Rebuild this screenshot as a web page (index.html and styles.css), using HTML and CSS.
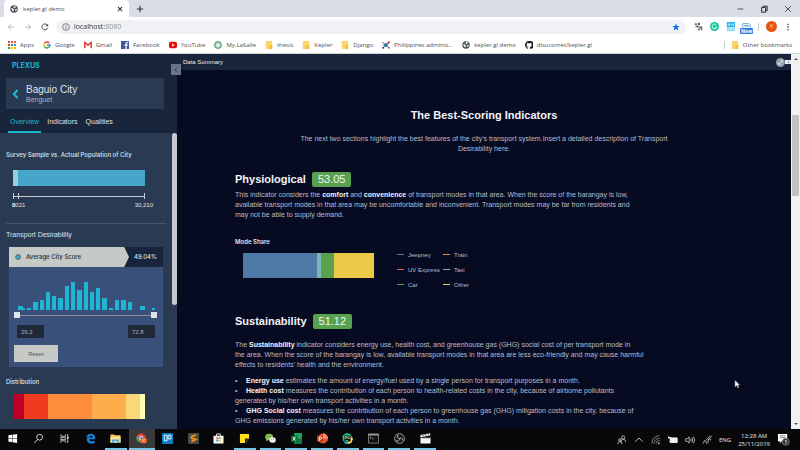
FILE: index.html
```html
<!DOCTYPE html>
<html lang="en">
<head>
<meta charset="utf-8">
<title>kepler.gl demo</title>
<link rel="stylesheet" href="styles.css">
</head>
<body>
<header class="browser">
  <div class="tabstrip">
    <div class="tab">
      <svg class="i8" viewBox="0 0 16 16"><circle cx="8" cy="8" r="7.5" fill="#50555b"/><path d="M2 6l4 1 2 3-2 3-2-3zM8 2l4 1-2 3-3-1zM11 8l3 0-2 4-2-1z" fill="#fff"/></svg>
      <span class="tab-title">kepler.gl demo</span>
      <button class="plain" aria-label="Close tab"><svg class="i6" viewBox="0 0 10 10"><path d="M1.500 1.500l7 7M8.500 1.500l-7 7" stroke="#333" stroke-width="1.700"/></svg></button>
    </div>
    <button class="plain" aria-label="New tab"><svg class="i8" viewBox="0 0 10 10"><path d="M5 1v8M1 5h8" stroke="#333" stroke-width="1.400"/></svg></button>
    <div class="window-controls">
      <button class="plain" aria-label="Minimize"><svg class="i8" viewBox="0 0 10 10"><path d="M2 5h7" stroke="#333"/></svg></button>
      <button class="plain" aria-label="Restore"><svg class="i8" viewBox="0 0 10 10"><path d="M2 3h5v6H2zM4 3V1.500h5V7H7" fill="none" stroke="#222" stroke-width="1.200"/></svg></button>
      <button class="plain" aria-label="Close"><svg class="i8" viewBox="0 0 10 10"><path d="M1.500 1.500l7 7M8.500 1.500l-7 7" stroke="#333"/></svg></button>
    </div>
  </div>
  <div class="toolbar">
    <nav class="history">
      <button class="plain" aria-label="Back"><svg class="i8" viewBox="0 0 10 10"><path d="M9 5H1.500M5 1.500L1.500 5 5 8.500" fill="none" stroke="#a5a8ac"/></svg></button>
      <button class="plain" aria-label="Forward"><svg class="i8" viewBox="0 0 10 10"><path d="M1 5h7.500M5 1.500L8.500 5 5 8.500" fill="none" stroke="#a5a8ac"/></svg></button>
      <button class="plain" aria-label="Reload"><svg class="i8" viewBox="0 0 10 10"><path d="M8.500 6A3.700 3.700 0 1 1 7.800 2.500" fill="none" stroke="#44474b" stroke-width="1.200"/><path d="M9 .8v3.400H5.600z" fill="#44474b"/></svg></button>
    </nav>
    <div class="omnibox">
      <svg class="i8" viewBox="0 0 10 10"><circle cx="5" cy="5" r="4.200" fill="none" stroke="#5f6368"/><path d="M5 4.400v3M5 2.400v1.100" stroke="#5f6368" stroke-width="1.100"/></svg>
      <input class="url" aria-label="Address" value="localhost:8080">
      <svg class="i8" viewBox="0 0 10 10"><path d="M5 .6l1.300 3 3.200.3L7.100 6l.7 3.300L5 7.600 2.200 9.300 2.900 6 .5 3.900l3.200-.3z" fill="#1a73e8"/></svg>
    </div>
    <div class="extensions">
      <svg class="i9" viewBox="0 0 12 12"><path d="M1 2h3v2H1zM5 1h3v3H5zM2 5h4v2H2zM6 6h5v2H6zM5 9h3v2H5zM9 8h2v3H9z" fill="#666"/><path d="M1 1l9 9" stroke="#888"/></svg>
      <svg class="i9" viewBox="0 0 12 12"><circle cx="6" cy="6" r="6" fill="#15c39a"/><path d="M8.500 4A3.200 3.200 0 1 0 9 7H6.500" fill="none" stroke="#fff" stroke-width="1.300"/></svg>
      <svg class="i9" viewBox="0 0 12 12"><path d="M1 0h11v7H1z" fill="#27b5e8"/><path d="M1 7h11v5H1z" fill="#8fdcf5"/><path d="M3 2v3M5 2v3M8 2v3M10 2v3M4 9h5" stroke="#fff"/></svg>
      <span class="new-ext">
        <svg class="i9" viewBox="0 0 12 12"><path d="M1 9V2h8l2 2v5" fill="#eaf5fd" stroke="#5c9bc4"/><path d="M3 5h6" stroke="#5c9bc4" stroke-width="1.500"/></svg>
        <b class="new-badge">New</b>
      </span>
      <i class="vrule"></i>
      <span class="avatar">K</span>
      <svg class="i8" viewBox="0 0 10 10"><path d="M4.200 1h1.700v1.700H4.200zM4.200 4.200h1.700v1.700H4.200zM4.200 7.400h1.700v1.700H4.200z" fill="#444"/></svg>
    </div>
  </div>
  <nav class="bookmarks">
    <a href="#"><svg class="i8" viewBox="0 0 8 8"><path d="M0 0h2v2H0zM0 3h2v2H0z" fill="#ea4335"/><path d="M3 0h2v2H3zM6 0h2v2H6z" fill="#e8594c"/><path d="M3 3h2v2H3zM0 6h2v2H0z" fill="#34a853"/><path d="M6 3h2v2H6z" fill="#4285f4"/><path d="M3 6h2v2H3zM6 6h2v2H6z" fill="#fbbc05"/></svg>Apps</a>
    <a href="#"><svg class="i8" viewBox="0 0 10 10" fill="none" stroke-width="1.900"><path d="M1.900 3A3.700 3.700 0 0 1 7.800 2.400" stroke="#ea4335"/><path d="M1.900 3a3.700 3.700 0 0 0 0 4" stroke="#fbbc05"/><path d="M1.900 7a3.700 3.700 0 0 0 5.800.6" stroke="#34a853"/><path d="M5 5h3.700a3.700 3.700 0 0 1-1 2.600" stroke="#4285f4"/></svg>Google</a>
    <a href="#"><svg class="i8" viewBox="0 0 10 10"><path d="M1 1.500h8v7H1z" fill="#f3f3f3"/><path d="M1 9V1.800l4 3.400 4-3.400V9" fill="none" stroke="#d93025" stroke-width="1.700"/></svg>Gmail</a>
    <a href="#"><svg class="i8" viewBox="0 0 10 10"><path d="M0 0h10v10H0z" fill="#3b5998"/><path d="M9 1.900H7.800Q6.300 1.900 6.300 3.500V10M4.500 5.200h4" fill="none" stroke="#fff" stroke-width="1.500"/></svg>Facebook</a>
    <a href="#"><svg class="i8" viewBox="0 0 10 10"><rect y="1" width="10" height="8" rx="2" fill="#e60f0f"/><path d="M4 3l3 2-3 2z" fill="#fff"/></svg>YouTube</a>
    <a href="#"><svg class="i8" viewBox="0 0 10 10"><circle cx="5" cy="5" r="4.300" fill="#a8cfb8" stroke="#3f9a6b" stroke-width="1.200"/><path d="M3 4l2-1 2 1v2L5 8 3 6z" fill="#e8f3ec"/></svg>My.LaSalle</a>
    <a href="#"><svg class="i8" viewBox="0 0 10 10"><path d="M1 0h8v10H1z" fill="#fbd56b"/><path d="M6 5h3v5H5z" fill="#f2bf3f"/></svg>thesis</a>
    <a href="#"><svg class="i8" viewBox="0 0 10 10"><path d="M1 0h8v10H1z" fill="#fbd56b"/><path d="M6 5h3v5H5z" fill="#f2bf3f"/></svg>Kepler</a>
    <a href="#"><svg class="i8" viewBox="0 0 10 10"><path d="M1 0h8v10H1z" fill="#fbd56b"/><path d="M6 5h3v5H5z" fill="#f2bf3f"/></svg>Django</a>
    <a href="#"><svg class="i8" viewBox="0 0 10 10"><path d="M0 1l9 8M1 9l8-7M5 5H1" stroke="#43648a"/><circle cx="5" cy="5" r="2.500" fill="#2877b0"/><circle cx="8.500" cy="1.700" r="1.500" fill="#d23f31"/><circle cx="1.500" cy="8.500" r="1.200" fill="#335"/><circle cx="8.800" cy="8.500" r="1" fill="#335"/></svg>Philippines adminis...</a>
    <a href="#"><svg class="i8" viewBox="0 0 16 16"><circle cx="8" cy="8" r="7.500" fill="#50555b"/><path d="M2 6l4 1 2 3-2 3-2-3zM8 2l4 1-2 3-3-1zM11 8l3 0-2 4-2-1z" fill="#fff"/></svg>kepler.gl demo</a>
    <a href="#"><svg class="i8" viewBox="0 0 16 16"><path fill="#191717" d="M8 0C3.580 0 0 3.580 0 8c0 3.540 2.290 6.530 5.470 7.590.4.070.55-.17.55-.38v-1.490c-2.010.37-2.690-.49-2.690-.94-.36-.91-.6-1.100-1.100-1.400.9-.5 1.500.4 1.900 1 .72 1.210 1.870.87 2.330.66.070-.52.280-.87.510-1.070C5.190 11.770 3.300 11 3.300 8c0-.87.310-1.590.82-2.150-.1-.2-.36-1.020.08-2.120 0 0 .67-.21 2.200.82a7.600 7.600 0 0 1 4 0c1.530-1.040 2.200-.82 2.200-.82.440 1.100.16 1.920.08 2.120.51.560.82 1.270.82 2.150 0 3-1.870 3.770-3.650 3.970.29.250.54.730.54 1.480v2.200c0 .21.150.46.550.38A8 8 0 0 0 8 0z"/></svg>dlsucomet/kepler.gl</a>
    <a href="#" class="other"><svg class="i8" viewBox="0 0 10 10"><path d="M1 0h8v10H1z" fill="#fbd56b"/><path d="M6 5h3v5H5z" fill="#f2bf3f"/></svg>Other bookmarks</a>
  </nav>
</header>

<div class="app">
  <aside class="sidebar">
    <div class="side-head">
      <div class="brand">PLEXUS</div>
      <div class="city">
        <button class="plain" aria-label="Back to cities"><svg class="back" viewBox="0 0 8 12"><path d="M6.500 1.200L2 6l4.500 4.800" fill="none" stroke="#1fbad6" stroke-width="2.400"/></svg></button>
        <div>
          <h1>Baguio City</h1>
          <p>Benguet</p>
        </div>
      </div>
      <nav class="tabs">
        <a href="#" class="active">Overview</a>
        <a href="#">Indicators</a>
        <a href="#">Qualities</a>
      </nav>
    </div>
    <button class="collapse" aria-label="Collapse sidebar"><svg class="i6" viewBox="0 0 10 10"><path d="M6.500 2L3.500 5l3 3" fill="none" stroke="#26303f" stroke-width="1.400"/></svg></button>
    <div class="side-body">
      <div class="side-scroll">
        <section class="population">
          <h2>Survey Sample vs. Actual Population of City</h2>
          <div class="pop-bar"><i></i></div>
          <div class="axis"><i></i></div>
          <div class="axis-labels"><span class="low"><span>0</span><span>8021</span></span><span class="high">30,210</span></div>
        </section>
        <section class="desirability">
          <h2 class="large">Transport Desirability</h2>
          <div class="card">
            <div class="card-head">
              <div class="ribbon"><svg class="i6" viewBox="0 0 10 10"><circle cx="5" cy="5" r="3.900" fill="#27b5cf" stroke="#6b7373" stroke-width="1.800"/></svg>Average City Score</div>
              <strong>49.04%</strong>
            </div>
            <svg class="histogram" viewBox="0 0 143 30"><g fill="#1fb6d6"><path d="M4 26h5v4H4zM7 28h4v2H7zM13 28h4v2h-4zM19 22h5v8h-5zM26 20h4v10h-4zM32 12h4v18h-4zM38 16h4v14h-4zM44 18h5v12h-5zM51 6h4v24h-4zM57 2h4v28h-4zM63 10h5v20h-5zM70 2h4v28h-4zM76 12h4v18h-4zM82 8h4v22h-4zM88 18h5v12h-5zM95 28h4v2h-4zM101 20h4v10h-4zM107 20h5v10h-5zM114 22h4v8h-4zM126 26h5v4h-5zM138 28h3v2h-3z"/></g></svg>
            <div class="slider">
              <input type="range" min="0" max="100" value="0" aria-label="Minimum score">
              <input type="range" min="0" max="100" value="100" aria-label="Maximum score">
            </div>
            <div class="bounds">
              <input type="text" value="29.2" aria-label="Lower bound">
              <input type="text" value="72.8" aria-label="Upper bound">
            </div>
            <button class="reset">Reset</button>
          </div>
        </section>
        <section class="distribution">
          <h2>Distribution</h2>
          <div class="stack">
            <i class="d1"></i><i class="d2"></i><i class="d3"></i><i class="d4"></i><i class="d5"></i><i class="d6"></i>
          </div>
        </section>
      </div>
      <div class="side-track"><i></i></div>
    </div>
  </aside>

  <main class="main">
    <div class="main-head">
      <span>Data Summary</span>
      <span class="head-icons"><svg class="i9" viewBox="0 0 12 12"><circle cx="6" cy="6" r="6" fill="#98a0ad"/><path d="M4 8l4-4M6 3.500h2.500V6M3.500 6v2.500H6" stroke="#e8ebf0" fill="none"/></svg><svg class="tag" viewBox="0 0 6 4"><path d="M0 0h6v4H0z" fill="#e9ecf2"/><path d="M3 2h1" stroke="#334"/></svg></span>
    </div>
    <div class="content">
      <h2>The Best-Scoring Indicators</h2>
      <p class="intro">The next two sections highlight the best features of the city's transport system.Insert a detailed description of Transport<br>Desirability here.</p>

      <section class="physio">
        <h3>Physiological <span class="badge">53.05</span></h3>
        <p>This indicator considers the <b>comfort</b> and <b>convenience</b> of transport modes in that area. When the score of the barangay is low,<br>available transport modes in that area may be uncomfortable and inconvenient. Transport modes may be far from residents and<br>may not be able to supply demand.</p>
        <h4>Mode Share</h4>
        <div class="mode">
          <div class="mode-bar"><i class="m1"></i><i class="m2"></i><i class="m3"></i><i class="m4"></i></div>
          <ul class="legend">
            <li><i class="jeepney"></i>Jeepney</li><li><i class="train"></i>Train</li>
            <li><i class="uv"></i>UV Express</li><li><i class="taxi"></i>Taxi</li>
            <li><i class="car"></i>Car</li><li><i class="misc"></i>Other</li>
          </ul>
        </div>
      </section>

      <section class="sustain">
        <h3>Sustainability <span class="badge">51.12</span></h3>
        <p>The <b>Sustainability</b> indicator considers energy use, health cost, and greenhouse gas (GHG) social cost of per transport mode in<br>the area. When the score of the barangay is low, available transport modes in that area are less eco-friendly and may cause harmful<br>effects to residents' health and the environment.</p>
        <ul class="points">
          <li><b>Energy use</b> estimates the amount of energy/fuel used by a single person for transport purposes in a month.</li>
          <li><b>Health cost</b> measures the contribution of each person to health-related costs in the city, because of airborne pollutants<br>generated by his/her own transport activities in a month.</li>
          <li><b>GHG Social cost</b> measures the contribution of each person to greenhouse gas (GHG) mitigation costs in the city, because of<br>GHG emissions generated by his/her own transport activities in a month.</li>
        </ul>
      </section>
    </div>
  </main>
  <div class="page-scroll">
    <svg class="i6" viewBox="0 0 6 6"><path d="M1 4l2-2 2 2z" fill="#505050"/></svg>
    <i></i>
    <svg class="i6" viewBox="0 0 6 6"><path d="M1 2l2 2 2-2z" fill="#505050"/></svg>
  </div>
  <svg class="cursor" viewBox="0 0 8 12"><path d="M1 .8v8.400l2-1.800 1.300 3 1.400-.6-1.300-2.900H7z" fill="#fff" stroke="#222" stroke-width=".5"/></svg>
</div>

<footer class="taskbar">
  <div class="apps">
    <span><svg viewBox="0 0 12 12"><path d="M1.500 2.500l4-.6v3.800h-4zM6 1.800l5-.7v4.600H6zM1.500 6.200h4V10l-4-.6zM6 6.200h5v4.600L6 10.100z" fill="#fff"/></svg></span>
    <span><svg viewBox="0 0 12 12"><circle cx="7.200" cy="4.600" r="3.200" fill="none" stroke="#ddd"/><path d="M5 7l-3.500 4" stroke="#ddd"/></svg></span>
    <span><svg viewBox="0 0 12 12"><path d="M2 1.500v2h5v-2M2 10.500v-2h5v2M2 5h5v2.200H2zM9.500 1v10" fill="none" stroke="#ddd" stroke-width=".9"/><path d="M9 4h1.500v2H9z" fill="#fff"/></svg></span>
    <span><svg viewBox="0 0 12 12"><path d="M1 5.800C1.300 2.700 3.500.8 6.300.8c3.200 0 4.900 2.200 4.900 4.900v1.200H4.500c.1 1.700 1.500 2.400 3 2.400 1.200 0 2.200-.3 3-.8v2.300c-.9.500-2.200.8-3.600.8C4 11.600 2 10 2 7.400c0-2 1-3.400 2.700-4.100C3 3.500 1.900 4.300 1 5.800zM4.600 5h3.900c0-1.200-.7-1.900-1.900-1.900-1.100 0-1.800.8-2 1.900z" fill="#1683d8"/></svg></span>
    <span class="run"><svg viewBox="0 0 12 12"><path d="M.5 1.500h4l1 1h6v8H.5z" fill="#f0c75c"/><path d="M.5 4h11v6.500H.5z" fill="#fbe391"/><path d="M2 7h8v4H8V9H4v2H2z" fill="#53a7d8"/></svg></span>
    <span class="run current"><svg viewBox="0 0 12 12"><circle cx="5.500" cy="5.500" r="5" fill="#e54335"/><path d="M1.200 3L4 7.500 5 10.500A5 5 0 0 1 1.200 3z" fill="#34a853"/><path d="M10.500 5.500a5 5 0 0 1-5 5l2-4z" fill="#fbbc05"/><circle cx="5.500" cy="5.500" r="2" fill="#4285f4" stroke="#fff" stroke-width=".8"/><circle cx="8.700" cy="8.300" r="3.200" fill="#f26a1b"/><path d="M7.800 6.800v3M9.700 6.800L8 8.400l1.700 1.400" stroke="#fcd3b3" stroke-width=".6" fill="none"/></svg></span>
    <span><svg viewBox="0 0 12 12"><rect width="12" height="12" rx="1" fill="#0a7fc9"/><path d="M2.500 2.500h3v6h-3zM6.700 2.500h3v4h-3z" fill="none" stroke="#fff" stroke-width="1"/></svg></span>
    <span><svg viewBox="0 0 12 12"><rect width="12" height="12" rx="1" fill="#4a4a4a"/><path d="M8.500 2.200L4 4v1.700L8.200 7 3.800 9.600" fill="none" stroke="#ff9800" stroke-width="1.900"/></svg></span>
    <span><svg viewBox="0 0 12 12"><path d="M4 3.500V1h4v2.500" fill="none" stroke="#eee"/><path d="M.5 3h11v8.500H.5z" fill="#f5f5f5"/><path d="M3.700 4.700h2v2h-2z" fill="#f25022"/><path d="M6.300 4.700h2v2h-2z" fill="#7fba00"/><path d="M3.700 7.300h2v2h-2z" fill="#00a4ef"/><path d="M6.300 7.300h2v2h-2z" fill="#ffb900"/></svg></span>
    <span class="run"><svg viewBox="0 0 12 12"><path d="M1 1h10v6l-4 4H1z" fill="#ffe01b"/><path d="M6.500 6H11v1.500L8 11H6.500z" fill="#2b2b2b"/></svg></span>
    <span class="run"><svg viewBox="0 0 12 12"><ellipse cx="4.500" cy="4.300" rx="4.300" ry="3.600" fill="#8bc34a"/><path d="M1.500 6.500L1 9l2.500-1.500z" fill="#8bc34a"/><ellipse cx="8.200" cy="7.500" rx="3.600" ry="3" fill="#f1f5ec"/><path d="M9.500 9.500l1.500 1.500-.3-2.500z" fill="#f1f5ec"/><path d="M2.800 3.700h1M5.500 3.700h1M7 7h.8M9 7h.8" stroke="#345" stroke-width=".8"/></svg></span>
    <span class="run"><svg viewBox="0 0 12 12"><path d="M3.500 0H12v12H3.500z" fill="#21a366"/><path d="M7.500 6H12v6H3.500V9z" fill="#107c41"/><path d="M0 3h7v6.500H0z" fill="#0e6b38"/><path d="M2 4.300l3 4M5 4.300l-3 4" stroke="#fff" stroke-width="1"/></svg></span>
    <span class="run"><svg viewBox="0 0 12 12"><circle cx="6.500" cy="6" r="5.500" fill="#e6552d"/><path d="M6.500.5A5.500 5.500 0 0 1 12 6H6.500z" fill="#ff8f6b"/><path d="M0 3h6.500v6.500H0z" fill="#c43e1c"/><path d="M2.500 8.700v-4.500h1.200a1.200 1.200 0 0 1 0 2.600H2.500" fill="none" stroke="#fff" stroke-width=".9"/></svg></span>
    <span class="run"><svg viewBox="0 0 12 12"><path d="M.5 3L5 0l4 1 3 5-2 5-6 1-3-4z" fill="#21c777"/><path d="M8 4l4 2-2 5-4 1z" fill="#f5df4d"/><path d="M1 7l3 5 2-2z" fill="#10b5d8"/><path d="M2.700 2.700h6.600v6.600H2.700z" fill="#111"/><path d="M4 6.300V3.800h1.200a.8.800 0 0 1 0 1.500H4M8.500 4.200a1.200 1.200 0 1 0 0 1.700M4 8.300h2.500" fill="none" stroke="#fff" stroke-width=".7"/></svg></span>
    <span class="run"><svg viewBox="0 0 12 12"><path d="M.5 1h11v10H.5z" fill="#111" stroke="#8d8d8d" stroke-width=".9"/><path d="M.5 2h11" stroke="#bbb" stroke-width="1.300"/><path d="M2 4l1.500 1L2 6M4.500 6.200H6" fill="none" stroke="#ddd" stroke-width=".7"/></svg></span>
    <span class="run"><svg viewBox="0 0 12 12"><circle cx="6" cy="6" r="5.400" fill="#1d1d1f" stroke="#bbb" stroke-width=".8"/><path d="M6 6c-2-.5-3-2-1.500-4M6 6c2-1 3.800 0 4 2.200M6 6c0 2-1.600 3.500-4 2.500" fill="none" stroke="#bbb" stroke-width="1"/></svg></span>
    <span class="run"><svg viewBox="0 0 12 12"><path d="M.5 5h11v6.500H.5zM.3 2.200L11 .2l.4 2.500L.7 4.600z" fill="#f7f7f7"/><path d="M2.500 1.800l1.500 2M5.500 1.200l1.500 2M8.500.7l1.500 2M.5 5.200h11" stroke="#111" stroke-width=".8"/></svg></span>
  </div>
  <div class="tray">
    <svg viewBox="0 0 12 12"><g fill="none" stroke="#ddd" stroke-width=".9"><circle cx="7.500" cy="3" r="2"/><path d="M4.500 9c0-2.500 1.500-4 3-4s3 1.500 3 3.500"/><circle cx="3.500" cy="6" r="1.500"/><path d="M1 11c0-2 1-3.300 2.500-3.300S6 9 6 11"/></g></svg>
    <svg viewBox="0 0 12 12"><path d="M1.500 8L6 3.500 10.500 8" fill="none" stroke="#ddd"/></svg>
    <svg viewBox="0 0 12 12"><g fill="none" stroke="#aaa" stroke-width=".9"><path d="M1 10a9 9 0 0 1 9-9M3.500 10.500A6.500 6.500 0 0 1 10.500 4M6 10.500a4 4 0 0 1 4.500-3.700"/></g><circle cx="9.500" cy="10" r="1" fill="#eee"/></svg>
    <svg viewBox="0 0 12 12"><path d="M2.500 3.500H11V9H2.500z" fill="#eee" stroke="#fff"/><path d="M0 3h4M1 1.500v3" stroke="#fff"/></svg>
    <svg viewBox="0 0 12 12"><g fill="none" stroke="#ddd" stroke-width=".9"><path d="M.8 4.500h2L5 2.200v7.600L2.800 7.500h-2zM6.700 4.300q1 1.700 0 3.400M8.500 3q1.700 3 0 6M10.300 2q2.200 4 0 8"/></g></svg>
    <svg viewBox="0 0 12 12"><path d="M1 10.500c2-1 .5-4 2.500-4s1 4 3 3.500S6.500 6 8 5s3 0 2.500 1.500M5 6l5-5 1.300 1.300L7 6.500" fill="none" stroke="#ddd" stroke-width=".9"/></svg>
    <span>ENG</span>
    <time>12:28 AM<br>25/11/2019</time>
    <svg class="notice" viewBox="0 0 14 14"><path d="M1 1h10v8H5l-2 2V9H1z" fill="#fff"/><path d="M3 3h6M3 5h6" stroke="#555" stroke-width=".8"/><circle cx="9.500" cy="9.500" r="3.800" fill="#333" stroke="#999" stroke-width=".7"/><path d="M8.700 8.500l1-.8v3.800" stroke="#fff" fill="none" stroke-width=".8"/></svg>
  </div>
</footer>
</body>
</html>
```

FILE: styles.css
```css
* { box-sizing: border-box; margin: 0; padding: 0; }

body {
  display: flex;
  flex-direction: column;
  height: 100vh;
  overflow: hidden;
  font: 7px/10px "Liberation Sans", Arial, sans-serif;
  background: #070b22;
}

svg { display: block; flex: none; }
i { display: block; flex: none; }
a { color: inherit; text-decoration: none; }
ul { list-style: none; }
input, button { font: inherit; border: 0; min-width: 0; }
.plain { background: none; display: block; }
.i6 { width: 6px; height: 6px; }
.i8 { width: 8px; height: 8px; }
.i9 { width: 9px; height: 9px; }

/* Browser chrome */
.browser {
  flex: none;
  background: #fff;
  color: #4b4f54;
  font: 6px/8px "Open Sans", "Noto Sans", sans-serif;
}
.tabstrip {
  display: flex;
  align-items: center;
  height: 17px;
  padding-left: 4px;
  background: #dadde5;
}
.tab {
  display: flex;
  align-items: center;
  gap: 5px;
  width: 125px;
  height: 17px;
  margin-right: 7px;
  padding: 0 6px;
  background: #fff;
  border-radius: 4px 4px 0 0;
}
.tab-title { flex: 1; }
.window-controls { display: flex; gap: 16px; margin-left: auto; padding-right: 8px; }
.toolbar {
  display: flex;
  align-items: center;
  height: 19px;
  padding: 0 8px 0 7px;
}
.history { display: flex; gap: 9px; margin-right: 7px; }
.omnibox {
  flex: 1;
  display: flex;
  align-items: center;
  gap: 4px;
  height: 14px;
  padding: 0 6px;
  border-radius: 7px;
  background: #eff1f4;
}
.url {
  flex: 1;
  color: transparent;
  background: linear-gradient(90deg, #2b2e33 31px, #85898e 31px);
  background-clip: text;
  -webkit-background-clip: text;
  outline: 0;
  font-size: 7px;
}
.extensions { display: flex; align-items: center; gap: 7px; margin-left: 8px; }
.new-ext { position: relative; }
.new-badge {
  position: absolute;
  left: -2px;
  top: 6px;
  padding: 0 1px;
  border-radius: 1px;
  background: #2f7de0;
  color: #fff;
  font-size: 5px;
  line-height: 6px;
}
.vrule { width: 1px; height: 8px; background: #c9ccd1; }
.avatar {
  width: 11px;
  height: 11px;
  border-radius: 50%;
  background: #e8540c;
  color: #fbd9c5;
  line-height: 11px;
  text-align: center;
}
.bookmarks {
  display: flex;
  gap: 9px;
  height: 18px;
  padding: 0 8px;
  align-items: center;
  border-bottom: 1px solid #d0d3d8;
}
.bookmarks a { display: flex; align-items: center; gap: 4px; white-space: nowrap; }
.bookmarks .other { margin-left: auto; padding-left: 6px; border-left: 1px solid #c9ccd1; }

/* Application */
.app { flex: 1; display: flex; min-height: 0; position: relative; }
.sidebar {
  position: relative;
  flex: none;
  display: flex;
  flex-direction: column;
  width: 177px;
  background: #2b3a53;
  color: #dfe3ea;
}
.side-head { flex: none; padding: 6px 13px 0 6px; background: #18253b; }
.brand {
  padding-left: 6px;
  color: #1fb6d6;
  font: bold 7px/12px Inter, sans-serif;
}
.city {
  display: flex;
  align-items: center;
  gap: 7px;
  height: 31px;
  margin-top: 6px;
  padding-left: 6px;
  background: #2b3a53;
}
.back { width: 7px; height: 10px; }
.city h1 { font: 10px/12px "Liberation Sans", sans-serif; }
.city p { color: #a9b1be; line-height: 8px; }
.tabs { display: flex; gap: 8px; height: 24px; padding: 8px 2px 0; }
.tabs .active { color: #1fb6d6; border-bottom: 2px solid #1fb6d6; padding: 0 2px; margin-right: -2px; }
.collapse {
  position: absolute;
  left: 171px;
  top: 10px;
  width: 10px;
  height: 11px;
  padding-left: 2px;
  background: #6b7484;
}
.side-body { flex: 1; display: flex; min-height: 0; }
.side-scroll { flex: 1; overflow: hidden; }
.side-track { flex: none; width: 5px; }
.side-track i { height: 172px; border-radius: 3px; background: #c5c8cc; }
.side-scroll h2 { font: 500 6px/10px Inter, sans-serif; }
.side-scroll h2.large { font: 7px/10px "Liberation Sans", sans-serif; }
.population { margin: 0 6px; padding-top: 17px; height: 91px; border-bottom: 1px solid #46546b; }
.pop-bar { margin: 10px 14px 0 7px; width: 132px; height: 16px; background: #45a5cb; }
.pop-bar i { width: 5px; height: 16px; background: #93d0d8; }
.axis {
  width: 132px;
  height: 6px;
  margin: 7px 0 0 7px;
  border: solid #c8cdd5;
  border-width: 0 1px;
  background: linear-gradient(#c8cdd5, #c8cdd5) center / 100% 1px no-repeat;
}
.axis i { width: 5px; height: 6px; border-right: 1px solid #c8cdd5; }
.axis-labels {
  display: flex;
  justify-content: space-between;
  width: 141px;
  margin: 2px 0 0 6px;
  font-size: 6px;
  line-height: 8px;
}
.low { display: grid; }
.low span { grid-area: 1 / 1; }
.desirability { padding: 6px 9px 0; }
.large { margin-left: -3px; }
.card { margin-top: 7px; height: 120px; background: #38507a; }
.card-head {
  display: flex;
  height: 20px;
  background: #17243b;
  line-height: 20px;
}
.ribbon {
  display: flex;
  align-items: center;
  gap: 5px;
  width: 120px;
  padding-left: 6px;
  background: #c6cac6;
  color: #1d2a41;
  clip-path: polygon(0 0, 96% 0, 100% 50%, 96% 100%, 0 100%);
}
.card-head strong { margin-left: auto; padding-right: 6px; }
.ribbon, .card-head strong { font-family: Inter, sans-serif; font-size: 6px; font-weight: 500; }
.histogram { width: 143px; height: 30px; margin: 13px 0 0 5px; }
.slider { display: grid; width: 143px; height: 6px; margin: 2px 0 0 5px; background: linear-gradient(#8b8f96, #8b8f96) center / 100% 1px no-repeat; }
.slider input { grid-area: 1 / 1; appearance: none; width: 143px; height: 6px; background: none; pointer-events: none; }
.slider input::-webkit-slider-thumb { appearance: none; width: 6px; height: 6px; background: #dfe3ea; pointer-events: auto; }
.bounds { display: flex; justify-content: space-between; padding: 7px 8px 0; }
.bounds input { width: 27px; height: 13px; padding-left: 4px; background: #202938; color: #a9b1be; font-size: 6px; }
.reset { display: block; width: 44px; height: 17px; margin: 7px 0 0 5px; background: #c6cac6; color: #4b5566; font-size: 6px; }
.distribution { padding: 10px 6px 0; }
.stack { display: flex; width: 132px; height: 25px; margin: 7px 0 0 7px; }
.d1 { width: 11px; background: #bd0026; }
.d2 { width: 24px; background: #f03b20; }
.d3 { width: 44px; background: #fd8d3c; }
.d4 { width: 34px; background: #fdae4b; }
.d5 { width: 14px; background: #fad778; }
.d6 { width: 5px; background: #ffffb2; }

.main { flex: 1; min-width: 0; overflow: hidden; color: #b9bdc8; }
.main-head {
  display: flex;
  justify-content: space-between;
  align-items: center;
  height: 16px;
  padding-left: 6px;
  background: #18253b;
  color: #e8ebf0;
  font-size: 6px;
}
.head-icons { display: flex; align-items: center; }
.tag { width: 6px; height: 4px; }
.content { padding: 36px 58px 0; white-space: nowrap; }
.content h2 { color: #f2f4f8; font: bold 11px/18px "Liberation Sans", sans-serif; text-align: center; }
.content b { color: #f2f4f8; }
.intro { margin-top: 10px; text-align: center; }
.content h3 {
  display: flex;
  align-items: center;
  gap: 6px;
  height: 15px;
  color: #f2f4f8;
  font: bold 11px/15px "Liberation Sans", sans-serif;
}
.badge { padding: 0 6px; border-radius: 2px; background: #59a14f; font-weight: 400; }
.physio { padding-top: 18px; }
.physio p { margin-top: 3px; }
.content h4 { margin-top: 17px; color: #e1e4ea; font: 600 6px/10px Inter, sans-serif; }
.mode { display: flex; gap: 23px; padding-left: 8px; }
.mode-bar { display: flex; height: 25px; margin-top: 6px; }
.m1 { width: 74px; background: #4e79a7; }
.m2 { width: 4px; background: #76b7b2; }
.m3 { width: 13px; background: #59a14f; }
.m4 { width: 40px; background: #edc948; }
.legend { display: grid; grid-template-columns: 46px 46px; grid-auto-rows: 15px; font-size: 6px; }
.legend li { display: flex; align-items: center; gap: 4px; }
.legend i { width: 7px; height: 1px; }
.jeepney { background: #4e79a7; }
.train { background: #f28e2b; }
.uv { background: #e15759; }
.taxi { background: #76b7b2; }
.car { background: #59a14f; }
.misc { background: #edc948; }
.sustain { padding-top: 22px; }
.sustain p { margin-top: 11px; }
.points { margin-top: 6px; }
.points li::before { content: "•"; display: inline-block; width: 11px; }

.page-scroll {
  flex: none;
  display: flex;
  flex-direction: column;
  align-items: center;
  width: 9px;
  padding: 2px 0;
  background: #f1f1f1;
}
.page-scroll i { width: 7px; height: 81px; margin: 53px 0 auto; background: #c1c1c1; }
.cursor { position: absolute; left: 734px; top: 325px; width: 7px; height: 11px; }

/* Desktop taskbar */
.taskbar {
  flex: none;
  display: flex;
  justify-content: space-between;
  height: 21px;
  background: #08080a;
  color: #e6e6e6;
  font: 6px/8px "Open Sans", "Noto Sans", sans-serif;
}
.apps { display: grid; grid-template-columns: repeat(17, 1fr); width: 438px; }
.apps span { display: grid; place-items: center; margin: 0 2px; border-bottom: 2px solid transparent; }
.apps svg { width: 11px; height: 11px; }
.apps .run { border-color: #76c3e8; }
.apps .current { margin: 0; background: #3a3a3c; }
.tray { display: flex; align-items: center; gap: 7px; padding-right: 10px; text-align: center; }
.tray svg { width: 10px; height: 10px; }
.tray .notice { width: 13px; height: 13px; }
```
